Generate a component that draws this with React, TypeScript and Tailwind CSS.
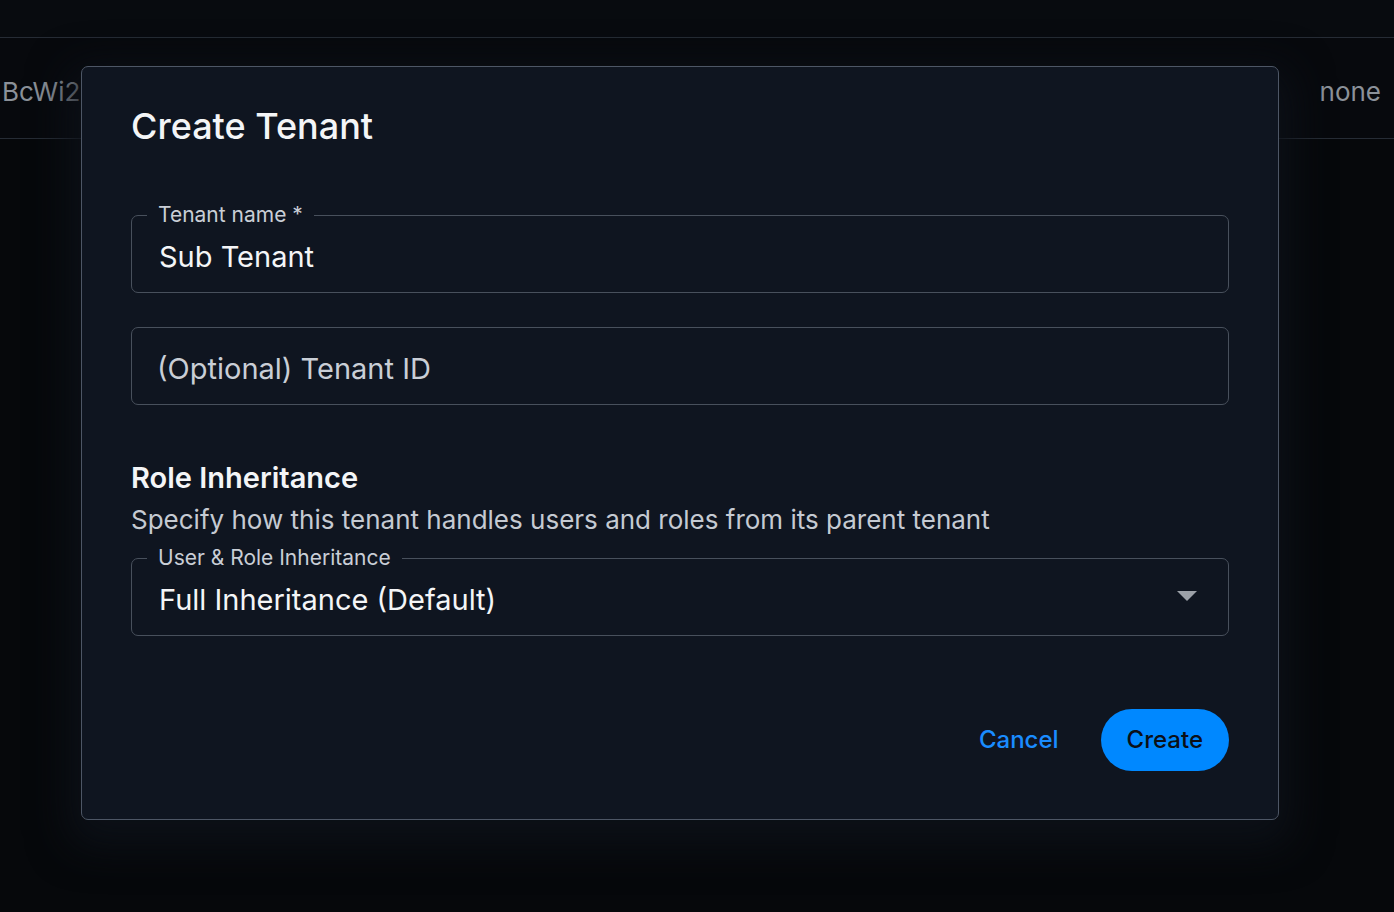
import type { ReactNode } from "react";

type OutlinedFieldProps = {
  label?: string;
  children: ReactNode;
  trailing?: ReactNode;
};

function OutlinedField({ label, children, trailing }: OutlinedFieldProps) {
  return (
    <div className="relative flex h-[78px] items-center rounded-[7px] border border-[#48505c] pl-[27px] pr-[30px]">
      {label && (
        <span className="absolute -top-[14px] left-[15px] bg-[#0f1520] px-[11px] text-[21px] leading-[26px] text-[#c9ced6]">
          {label}
        </span>
      )}
      <div className="flex-1 pt-[4px]">{children}</div>
      {trailing}
    </div>
  );
}

export default function App() {
  return (
    <div className="relative min-h-screen w-full overflow-hidden bg-[#06080b] font-['Inter',sans-serif]">
      {/* page behind the dialog */}
      <div className="h-[38px] border-b border-[#262c35] bg-[#080b0f]" />
      <div className="flex h-[101px] items-center justify-between border-b border-[#262c35] bg-[#07090d] pt-[6px] text-[26px] text-[#8b9199]">
        <span className="ml-[2px]">BcWi2</span>
        <span className="mr-[13px]">none</span>
      </div>

      {/* dialog */}
      <div className="absolute left-[81px] top-[66px] flex w-[1198px] flex-col rounded-[7px] border border-[#4d5665] bg-[#0f1520] px-[49px] pb-[48px] pt-[38px] shadow-[0_14px_40px_12px_rgba(13,17,24,0.95)]">
        <h2 className="text-[36px] font-medium leading-[43px] text-[#f4f5f7]">Create Tenant</h2>

        <div className="mt-[67px]">
          <OutlinedField label="Tenant name *">
            <span className="text-[29px] leading-[35px] text-[#f4f5f7]">Sub Tenant</span>
          </OutlinedField>
        </div>

        <div className="mt-[34px]">
          <OutlinedField>
            <span className="-ml-[2px] text-[29px] leading-[35px] text-[#c9ced6]">(Optional) Tenant ID</span>
          </OutlinedField>
        </div>

        <h3 className="mt-[55px] text-[29px] font-semibold leading-[36px] text-[#f4f5f7]">Role Inheritance</h3>
        <p className="mt-[8px] text-[26px] leading-[32px] text-[#c5cad2]">
          Specify how this tenant handles users and roles from its parent tenant
        </p>

        <div className="mt-[22px]">
          <OutlinedField
            label="User & Role Inheritance"
            trailing={
              <svg width="22" height="12" viewBox="0 0 22 12" className="mt-[-2px]">
                <path d="M1 1 L21 1 L11 11 Z" fill="#9ca1a8" />
              </svg>
            }
          >
            <span className="text-[29px] leading-[35px] text-[#f4f5f7]">Full Inheritance (Default)</span>
          </OutlinedField>
        </div>

        <div className="mt-[73px] flex items-center justify-end gap-[26px]">
          <button className="px-[16px] text-[24px] font-medium leading-[30px] text-[#1a8cff]">Cancel</button>
          <button className="h-[62px] rounded-full bg-[#0088ff] px-[26px] text-[24px] font-medium leading-[30px] text-[#0b1018]">
            Create
          </button>
        </div>
      </div>
    </div>
  );
}
